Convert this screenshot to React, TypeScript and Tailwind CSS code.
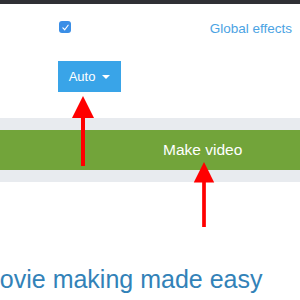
import React from 'react';

const Arrow: React.FC<{ className: string }> = ({ className }) => (
  <svg className={className} viewBox="0 0 22 70" fill="#ff0000">
    <polygon points="11,0 0,22 22,22" />
    <rect x="9" y="20" width="4" height="50" />
  </svg>
);

const App: React.FC = () => {
  return (
    <div className="relative w-[300px] h-[300px] overflow-hidden bg-white font-['Liberation_Sans',Arial,sans-serif]">
      <div className="h-[4px] bg-[#2f3035]" />

      <div className="flex items-start justify-between pl-[59px] pr-[8px] pt-[13px]">
        <div className="mt-[4px] w-[12px] h-[12px] rounded-[3px] bg-[#3a8ee6] flex items-center justify-center">
          <svg viewBox="0 0 12 12" className="w-[9px] h-[9px]" fill="none" stroke="white" strokeWidth="1.6" strokeLinecap="round" strokeLinejoin="round">
            <path d="M2.5 6.5 L5 9 L9.5 3" />
          </svg>
        </div>
        <span className="mt-[4px] text-[13.5px] leading-[16px] text-[#4ba3e3]">Global effects</span>
      </div>

      <div className="pl-[58px] pt-[24px]">
        <button className="flex items-center gap-[7px] h-[31px] w-[63px] justify-center bg-[#39a4e8] text-white text-[13px]">
          Auto
          <span className="w-0 h-0 border-l-[4px] border-r-[4px] border-t-[4px] border-l-transparent border-r-transparent border-t-white" />
        </button>
      </div>

      <div className="mt-[26px] bg-[#e8ebef] py-[12px]">
        <div className="h-[40px] bg-[#72a43a] flex items-center pl-[163px] text-white text-[15.5px]">
          Make video
        </div>
      </div>

      <div className="mt-[83px] ml-[-21px] text-[25px] leading-[28px] text-[#3282b8] whitespace-nowrap">
        Movie making made easy
      </div>

      <Arrow className="absolute left-[72px] top-[96px] w-[22px] h-[70px]" />
      <Arrow className="absolute left-[193px] top-[162px] w-[22px] h-[65px]" />
    </div>
  );
};

export default App;
